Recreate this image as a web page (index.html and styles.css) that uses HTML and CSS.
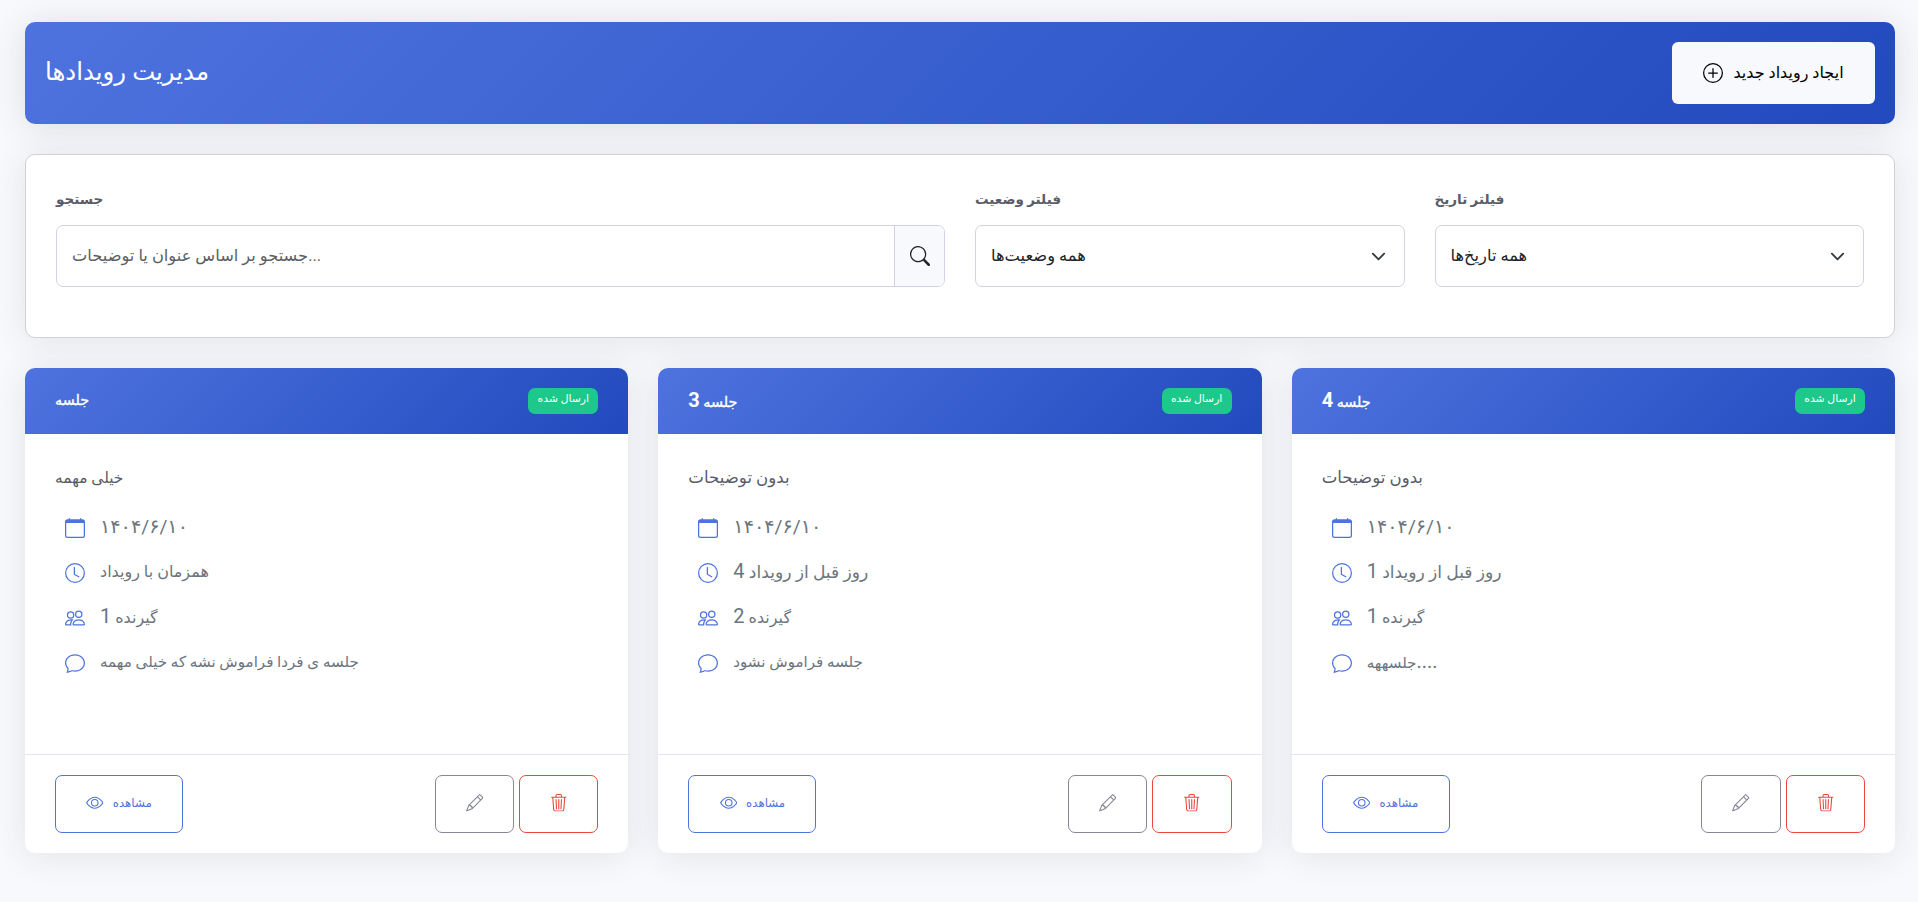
FILE: index.html
```html
<!DOCTYPE html>
<html lang="fa">
<head>
<meta charset="utf-8">
<title>مدیریت رویدادها</title>
<link rel="stylesheet" href="styles.css">
</head>
<body>
<svg class="sprite" aria-hidden="true">
  <symbol id="plus-circle" viewBox="0 0 16 16"><path d="M8 15A7 7 0 1 1 8 1a7 7 0 0 1 0 14m0 1A8 8 0 1 0 8 0a8 8 0 0 0 0 16"/><path d="M8 4a.5.5 0 0 1 .5.5v3h3a.5.5 0 0 1 0 1h-3v3a.5.5 0 0 1-1 0v-3h-3a.5.5 0 0 1 0-1h3v-3A.5.5 0 0 1 8 4"/></symbol>
  <symbol id="search" viewBox="0 0 16 16"><path d="M11.742 10.344a6.5 6.5 0 1 0-1.397 1.398h-.001q.044.06.098.115l3.85 3.85a1 1 0 0 0 1.415-1.414l-3.85-3.85a1 1 0 0 0-.115-.1zM12 6.5a5.5 5.5 0 1 1-11 0 5.5 5.5 0 0 1 11 0"/></symbol>
  <symbol id="chevron" viewBox="0 0 16 16"><path fill="none" stroke="#343a40" stroke-linecap="round" stroke-linejoin="round" stroke-width="2" d="m2 5 6 6 6-6"/></symbol>
  <symbol id="calendar" viewBox="0 0 16 16"><path d="M3.5 0a.5.5 0 0 1 .5.5V1h8V.5a.5.5 0 0 1 1 0V1h1a2 2 0 0 1 2 2v11a2 2 0 0 1-2 2H2a2 2 0 0 1-2-2V3a2 2 0 0 1 2-2h1V.5a.5.5 0 0 1 .5-.5M1 4v10a1 1 0 0 0 1 1h12a1 1 0 0 0 1-1V4z"/></symbol>
  <symbol id="clock" viewBox="0 0 16 16"><path d="M8 3.5a.5.5 0 0 0-1 0V9a.5.5 0 0 0 .252.434l3.5 2a.5.5 0 0 0 .496-.868L8 8.71z"/><path d="M8 16A8 8 0 1 0 8 0a8 8 0 0 0 0 16m7-8A7 7 0 1 1 1 8a7 7 0 0 1 14 0"/></symbol>
  <symbol id="people" viewBox="0 0 16 16"><path d="M15 14s1 0 1-1-1-4-5-4-5 3-5 4 1 1 1 1zm-7.978-1L7 12.996c.001-.264.167-1.03.76-1.72C8.312 10.629 9.282 10 11 10c1.717 0 2.687.63 3.24 1.276.593.69.758 1.457.76 1.72l-.008.002-.014.002zM11 7a2 2 0 1 0 0-4 2 2 0 0 0 0 4m3-2a3 3 0 1 1-6 0 3 3 0 0 1 6 0M6.936 9.28a6 6 0 0 0-1.23-.247A7 7 0 0 0 5 9c-4 0-5 3-5 4q0 1 1 1h4.216A2.24 2.24 0 0 1 5 13c0-1.01.377-2.042 1.09-2.904.243-.294.526-.569.846-.816M4.92 10A5.5 5.5 0 0 0 4 13H1c0-.26.164-1.03.76-1.724.545-.636 1.492-1.256 3.16-1.275ZM1.5 5.5a3 3 0 1 1 6 0 3 3 0 0 1-6 0m3-2a2 2 0 1 0 0 4 2 2 0 0 0 0-4"/></symbol>
  <symbol id="chat" viewBox="0 0 16 16"><path d="M2.678 11.894a1 1 0 0 1 .287.801 11 11 0 0 1-.398 2c1.395-.323 2.247-.697 2.634-.893a1 1 0 0 1 .71-.074A8 8 0 0 0 8 14c3.996 0 7-2.807 7-6s-3.004-6-7-6-7 2.808-7 6c0 1.468.617 2.83 1.678 3.894m-.493 3.905a22 22 0 0 1-.713.129c-.2.032-.352-.176-.273-.362a10 10 0 0 0 .244-.637l.003-.01c.248-.72.45-1.548.524-2.319C.743 11.37 0 9.76 0 8c0-3.866 3.582-7 8-7s8 3.134 8 7-3.582 7-8 7a9 9 0 0 1-2.347-.306c-.52.263-1.639.742-3.468 1.105"/></symbol>
  <symbol id="eye" viewBox="0 0 16 16"><path d="M16 8s-3-5.5-8-5.5S0 8 0 8s3 5.5 8 5.5S16 8 16 8M1.173 8a13 13 0 0 1 1.66-2.043C4.12 4.668 5.88 3.5 8 3.5s3.879 1.168 5.168 2.457A13 13 0 0 1 14.828 8q-.086.13-.195.288c-.335.48-.83 1.12-1.465 1.755C11.879 11.332 10.119 12.5 8 12.5s-3.879-1.168-5.168-2.457A13 13 0 0 1 1.172 8z"/><path d="M8 5.5a2.5 2.5 0 1 0 0 5 2.5 2.5 0 0 0 0-5M4.5 8a3.5 3.5 0 1 1 7 0 3.5 3.5 0 0 1-7 0"/></symbol>
  <symbol id="pencil" viewBox="0 0 16 16"><path d="M12.146.146a.5.5 0 0 1 .708 0l3 3a.5.5 0 0 1 0 .708l-10 10a.5.5 0 0 1-.168.11l-5 2a.5.5 0 0 1-.65-.65l2-5a.5.5 0 0 1 .11-.168zM11.207 2.5 13.5 4.793 14.793 3.5 12.5 1.207zm1.586 3L10.5 3.207 4 9.707V10h.5a.5.5 0 0 1 .5.5v.5h.5a.5.5 0 0 1 .5.5v.5h.293zm-9.761 5.175-.106.106-1.528 3.821 3.821-1.528.106-.106A.5.5 0 0 1 5 12.5V12h-.5a.5.5 0 0 1-.5-.5V11h-.5a.5.5 0 0 1-.468-.325"/></symbol>
  <symbol id="trash" viewBox="0 0 16 16"><path d="M6.5 1h3a.5.5 0 0 1 .5.5v1H6v-1a.5.5 0 0 1 .5-.5M11 2.5v-1A1.5 1.5 0 0 0 9.5 0h-3A1.5 1.5 0 0 0 5 1.5v1H1.5a.5.5 0 0 0 0 1h.538l.853 10.66A2 2 0 0 0 4.885 16h6.23a2 2 0 0 0 1.994-1.84l.853-10.66h.538a.5.5 0 0 0 0-1zm1.958 1-.846 10.58a1 1 0 0 1-.997.92h-6.23a1 1 0 0 1-.997-.92L3.042 3.5zm-7.487 1a.5.5 0 0 1 .528.47l.5 8.5a.5.5 0 0 1-.998.06L5 5.03a.5.5 0 0 1 .47-.53Zm5.058 0a.5.5 0 0 1 .47.53l-.5 8.5a.5.5 0 1 1-.998-.06l.5-8.5a.5.5 0 0 1 .528-.47M8 4.5a.5.5 0 0 1 .5.5v8.5a.5.5 0 0 1-1 0V5a.5.5 0 0 1 .5-.5"/></symbol>
</svg>

<header class="page-head">
  <h1 class="page-title">مدیریت رویدادها</h1>
  <button class="create"><svg class="icon"><use href="#plus-circle"/></svg><span class="create-text">ایجاد رویداد جدید</span></button>
</header>

<section class="filters">
  <div class="field">
    <label class="label">جستجو</label>
    <div class="control search">
      <span class="placeholder">جستجو بر اساس عنوان یا توضیحات...</span>
      <span class="search-btn"><svg class="icon"><use href="#search"/></svg></span>
    </div>
  </div>
  <div class="field">
    <label class="label">فیلتر وضعیت</label>
    <div class="control select"><span class="value">همه وضعیت‌ها</span><svg class="chevron"><use href="#chevron"/></svg></div>
  </div>
  <div class="field">
    <label class="label">فیلتر تاریخ</label>
    <div class="control select"><span class="value">همه تاریخ‌ها</span><svg class="chevron"><use href="#chevron"/></svg></div>
  </div>
</section>

<main class="cards">
  <article class="card">
    <div class="card-head"><h2 class="card-title">جلسه</h2><span class="badge">ارسال شده</span></div>
    <div class="card-body">
      <p class="desc desc-short">خیلی مهمه</p>
      <ul class="meta">
        <li class="row"><svg class="icon"><use href="#calendar"/></svg><span class="date">۱۴۰۴/۶/۱۰</span></li>
        <li class="row"><svg class="icon"><use href="#clock"/></svg><span>همزمان با رویداد</span></li>
        <li class="row"><svg class="icon"><use href="#people"/></svg><span><span class="num">1</span> گیرنده</span></li>
        <li class="row"><svg class="icon"><use href="#chat"/></svg><span class="message">جلسه ی فردا فراموش نشه که خیلی مهمه</span></li>
      </ul>
    </div>
    <div class="card-foot">
      <button class="btn view"><svg class="icon-sm"><use href="#eye"/></svg><span>مشاهده</span></button>
      <div class="tools"><button class="btn edit"><svg class="icon-sm"><use href="#pencil"/></svg></button><button class="btn remove"><svg class="icon-sm"><use href="#trash"/></svg></button></div>
    </div>
  </article>
  <article class="card">
    <div class="card-head"><h2 class="card-title">جلسه <span class="num">3</span></h2><span class="badge">ارسال شده</span></div>
    <div class="card-body">
      <p class="desc">بدون توضیحات</p>
      <ul class="meta">
        <li class="row"><svg class="icon"><use href="#calendar"/></svg><span class="date">۱۴۰۴/۶/۱۰</span></li>
        <li class="row"><svg class="icon"><use href="#clock"/></svg><span class="reminder"><span class="num">4</span> روز قبل از رویداد</span></li>
        <li class="row"><svg class="icon"><use href="#people"/></svg><span><span class="num">2</span> گیرنده</span></li>
        <li class="row"><svg class="icon"><use href="#chat"/></svg><span class="message">جلسه فراموش نشود</span></li>
      </ul>
    </div>
    <div class="card-foot">
      <button class="btn view"><svg class="icon-sm"><use href="#eye"/></svg><span>مشاهده</span></button>
      <div class="tools"><button class="btn edit"><svg class="icon-sm"><use href="#pencil"/></svg></button><button class="btn remove"><svg class="icon-sm"><use href="#trash"/></svg></button></div>
    </div>
  </article>
  <article class="card">
    <div class="card-head"><h2 class="card-title">جلسه <span class="num">4</span></h2><span class="badge">ارسال شده</span></div>
    <div class="card-body">
      <p class="desc">بدون توضیحات</p>
      <ul class="meta">
        <li class="row"><svg class="icon"><use href="#calendar"/></svg><span class="date">۱۴۰۴/۶/۱۰</span></li>
        <li class="row"><svg class="icon"><use href="#clock"/></svg><span class="reminder"><span class="num">1</span> روز قبل از رویداد</span></li>
        <li class="row"><svg class="icon"><use href="#people"/></svg><span><span class="num">1</span> گیرنده</span></li>
        <li class="row"><svg class="icon"><use href="#chat"/></svg><span class="message">جلسههه<span class="num">....</span></span></li>
      </ul>
    </div>
    <div class="card-foot">
      <button class="btn view"><svg class="icon-sm"><use href="#eye"/></svg><span>مشاهده</span></button>
      <div class="tools"><button class="btn edit"><svg class="icon-sm"><use href="#pencil"/></svg></button><button class="btn remove"><svg class="icon-sm"><use href="#trash"/></svg></button></div>
    </div>
  </article>
</main>
</body>
</html>
```
FILE: styles.css
```css
* { box-sizing: border-box; }
body {
  margin: 0;
  padding: 22px 23px 0 25px;
  min-height: 902px;
  background: #f8f9fc;
  font-family: Roboto, "DejaVu Sans", sans-serif;
  font-size: 16px;
  color: #212529;
  display: flex;
  flex-direction: column;
  gap: 30px;
}
h1, h2, p, ul { margin: 0; padding: 0; font-weight: 400; }
button { font: inherit; background: none; border: 0; white-space: nowrap; }
.sprite { display: none; }
.icon { width: 20px; height: 20px; fill: currentColor; flex: none; }
.icon-sm { width: 17.5px; height: 17.5px; fill: currentColor; flex: none; }

.page-head, .filters, .card {
  border-radius: 10px;
  box-shadow: 0 3px 35px rgba(58, 59, 69, .11);
}
.page-head {
  height: 102px;
  padding: 20px;
  display: flex;
  justify-content: space-between;
  align-items: center;
  color: #fff;
  background: linear-gradient(135deg, #4e73df 0%, #224abe 100%);
  box-shadow: 0 3px 35px rgba(58, 59, 69, .14);
}
.page-title { font-size: 24.4px; line-height: 30px; padding-bottom: 3px; }
.create {
  width: 203px;
  height: 62px;
  border-radius: 6px;
  background: #f8f9fc;
  color: #000;
  display: flex;
  justify-content: center;
  align-items: center;
  gap: 10px;
}
.create-text { padding-bottom: 2px; }

.filters {
  height: 184px;
  padding: 30px;
  border: 1px solid #d0d1d4;
  background: #fff;
  display: grid;
  grid-template-columns: 889px 429.5px 429.5px;
  gap: 30px;
}
.label { display: block; height: 30px; line-height: 28px; margin-bottom: 10px; font-weight: 700; font-size: 13.5px; color: #5a5c69; }
.control {
  height: 62px;
  border: 1px solid #d1d3e2;
  border-radius: 7px;
  background: #fff;
  display: flex;
  justify-content: space-between;
  align-items: center;
  overflow: hidden;
  padding-left: 15px;
}
.select { padding-right: 18px; }
.value { font-size: 16.3px; padding-bottom: 2px; }
.chevron { width: 15px; height: 15px; }
.placeholder { color: #5c5f63; font-size: 16.25px; padding-bottom: 2px; }
.search-btn {
  width: 50px;
  height: 60px;
  background: #f8f9fc;
  border-left: 1px solid #d1d3e2;
  display: flex;
  justify-content: center;
  align-items: center;
}

.cards { display: grid; grid-template-columns: repeat(3, 1fr); gap: 30px; }
.card { height: 485px; background: #fff; display: flex; flex-direction: column; }
.card-head {
  height: 66px;
  padding: 0 30px;
  border-radius: 10px 10px 0 0;
  background: linear-gradient(135deg, #4e73df 0%, #224abe 100%);
  color: #fff;
  display: flex;
  justify-content: space-between;
  align-items: center;
}
.card-title { font-size: 14.3px; padding-bottom: 2px; -webkit-text-stroke: .35px currentColor; }
.card-title .num { font-weight: 700; -webkit-text-stroke: 0; }
.num { font-size: 20px; line-height: 1; }
.badge {
  width: 70px;
  height: 26px;
  border-radius: 7px;
  background: #1cc88a;
  font-size: 10.8px;
  line-height: 22px;
  text-align: center;
}
.card-body { flex: 1; padding: 30px; }
.desc { height: 30px; line-height: 28px; color: #5a5c69; font-size: 16.6px; margin-bottom: 11px; }
.desc-short { font-size: 15.4px; }
.meta { list-style: none; }
.row { height: 45px; padding-left: 10px; display: flex; align-items: center; gap: 15px; color: #6c757d; white-space: nowrap; }
.row .icon { color: #4e73df; }
.row > span { padding-bottom: 2px; }
.date { font-size: 19.2px; }
.reminder { font-size: 17.1px; }
.message { font-size: 15.1px; }
.card-foot {
  height: 99px;
  padding: 0 30px;
  border-top: 1px solid #e3e6f0;
  display: flex;
  justify-content: space-between;
  align-items: center;
}
.btn {
  height: 58px;
  border: 1px solid;
  border-radius: 7px;
  display: flex;
  justify-content: center;
  align-items: center;
  gap: 9px;
}
.btn svg, .btn span { margin-bottom: 2px; }
.view { width: 128px; color: #4e73df; font-size: 11.8px; }
.tools { display: flex; gap: 5px; }
.edit { width: 79.3px; color: #858796; }
.remove { width: 79.3px; color: #e74a3b; }
```
